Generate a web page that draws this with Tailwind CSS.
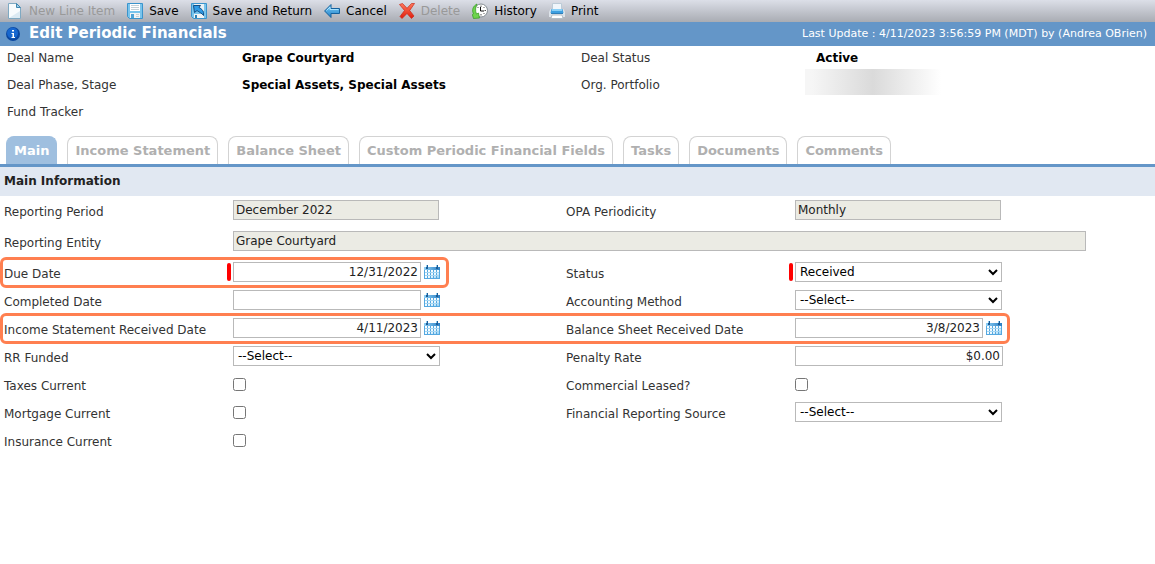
<!DOCTYPE html>
<html lang="en">
<head>
    <meta charset="UTF-8">
    <meta name="viewport" content="width=device-width, initial-scale=1.0">
    <title>Edit Periodic Financials</title>
    <script src="https://cdn.jsdelivr.net/npm/@tailwindcss/browser@4"></script>
</head>
<body class="bg-white min-h-screen font-['DejaVu_Sans',Verdana,sans-serif] text-xs text-[#333]">

    <!-- Shared gradients and the calendar glyph -->
    <svg class="absolute w-0 h-0" aria-hidden="true">
        <defs>
            <linearGradient id="blue" x1="0" y1="0" x2="0" y2="1">
                <stop offset="0" stop-color="#7fd0f8"/>
                <stop offset="1" stop-color="#1f7fc8"/>
            </linearGradient>
            <linearGradient id="red" x1="0" y1="0" x2="0" y2="1">
                <stop offset="0" stop-color="#ff7a5c"/>
                <stop offset="1" stop-color="#e01c0c"/>
            </linearGradient>
            <linearGradient id="bar" x1="0" y1="0" x2="1" y2="0">
                <stop offset="0" stop-color="#8fd0f5"/>
                <stop offset="1" stop-color="#2a7fc4"/>
            </linearGradient>
            <linearGradient id="cells" x1="0" y1="0" x2="1" y2="1">
                <stop offset="0" stop-color="#ffffff"/>
                <stop offset=".6" stop-color="#eef9ff"/>
                <stop offset="1" stop-color="#8fcdf2"/>
            </linearGradient>
            <symbol id="calendar" viewBox="0 0 16 16">
                <path d="M0 3h16v12H0z" fill="#55a8e0"/>
                <path d="M0 3h16v3H0z" fill="url(#bar)"/>
                <path d="M2 1h2v4H2zM12 1h2v4h-2z" fill="#1d5c97"/>
                <path d="M2 1h1v2H2zM12 1h1v2h-1z" fill="#8fcdf0"/>
                <path d="M1 6h2v2H1zM4 6h2v2H4zM7 6h2v2H7zM10 6h2v2h-2zM13 6h2v2h-2zM1 9h2v2H1zM4 9h2v2H4zM7 9h2v2H7zM10 9h2v2h-2zM13 9h2v2h-2zM1 12h2v2H1zM4 12h2v2H4zM7 12h2v2H7zM10 12h2v2h-2zM13 12h2v2h-2z" fill="url(#cells)"/>
                <path d="M1 8h14v1H1zM1 11h14v1H1z" fill="#a5d6f3"/>
            </symbol>
        </defs>
    </svg>

    <!-- Toolbar -->
    <div class="flex items-center gap-3 h-[22px] pl-[7px] bg-linear-to-b from-[#dcdfe8] to-[#a9acb3] text-black">
        <button class="flex items-center gap-1.5 text-[#999]" disabled>
            <svg class="w-4 h-4" viewBox="0 0 16 16"><path d="M1.500.5h8l4 4v11h-12z" fill="#f7fbfd" stroke="#7fa9c2"/><path d="M9.500.5v4h4z" fill="#9fd0ec" stroke="#3f86b0"/><path d="M2 15h11V8z" fill="#dbeaf3"/></svg>
            New Line Item
        </button>
        <button class="flex items-center gap-1.5">
            <svg class="w-4 h-4" viewBox="0 0 16 16"><path d="M.5.5h15v15h-13l-2-2z" fill="#79c4ec" stroke="#3a94cc"/><path d="M3 1h10v7H3z" fill="#fff"/><path d="M4 2.500h8M4 4.500h8M4 6.500h8" stroke="#c4d0d6"/><path d="M3 10h10v5H3z" fill="#f1f4f5"/><path d="M4 11h3v4H4z" fill="#4fa3d6"/><path d="M9 11.500h3M9 13.500h3" stroke="#c8d0d4"/></svg>
            Save
        </button>
        <button class="flex items-center gap-1.5">
            <svg class="w-4 h-4" viewBox="0 0 16 16"><path d="M.5.5h15v15h-13l-2-2z" fill="#79c4ec" stroke="#3a94cc"/><path d="M3 1h10v7H3z" fill="#e9f1f5"/><path d="M3 11h10v4H3z" fill="#f1f4f5"/><path d="M4 12h2v3H4z" fill="#2f80b4"/><path d="M2.500 2.500h7L8 4.500C11 6 13 8 12.500 12.500 11 10 8.500 9.500 6 7.500L3.500 9.500z" fill="#2e9be6" stroke="#124f86" stroke-linejoin="round"/></svg>
            Save and Return
        </button>
        <button class="flex items-center gap-1.5">
            <svg class="w-4 h-4" viewBox="0 0 16 16"><path d="M.6 8L7 1.500v4h8.500v5H7v4z" fill="url(#blue)" stroke="#14609c" stroke-linejoin="round"/><path d="M2.500 7.500L6 4v2.500h8.500" fill="none" stroke="#a8e2ff"/></svg>
            Cancel
        </button>
        <button class="flex items-center gap-1.5 text-[#999]" disabled>
            <svg class="w-4 h-4" viewBox="0 0 16 16"><path d="M.5 1.500L3.500.5l4.500 4.800L12.500.5h3L10.700 7.500l4.300 5.500-2.500 2.500L8 10.500l-5 5-2-2 4.500-6z" fill="url(#red)" stroke="#c8281a" stroke-width=".7" stroke-linejoin="round"/></svg>
            Delete
        </button>
        <button class="flex items-center gap-1.5">
            <svg class="w-4 h-4" viewBox="0 0 16 16"><circle cx="9" cy="7.500" r="6.500" fill="#fff" stroke="#858d93"/><path d="M9 2.500V4M9 11v1.500M12.500 7.500H14M5.500 4l1 1M12.500 4l-1 1M12.500 11l-1-1" stroke="#555"/><path d="M8.500 4v4H12" fill="none" stroke="#111"/><path d="M5 1C1 3-.5 7 1.500 10.800L.3 11.500 1.500 15.500l6-.5L6.500 10 4.500 11C3 7.500 3.500 4 5 1z" fill="#6fd44e" stroke="#2f9a1e" stroke-width=".7"/></svg>
            History
        </button>
        <button class="flex items-center gap-1.5">
            <svg class="w-4 h-4" viewBox="0 0 16 16"><path d="M3.500.5h9V7h-9z" fill="#f0f6fb" stroke="#bccbd7"/><path d="M1.500 6h13l1.500 3v5H0V9z" fill="#dde3e9"/><path d="M2.500 6h11l1 4h-13z" fill="#3d9fe0"/><path d="M3 6h10v2H3z" fill="#8ad0f7"/><path d="M2 10h12v1H2z" fill="#2f7fba"/><path d="M3 12h10l1 3.500H2z" fill="#fff" stroke="#b4bec6"/></svg>
            Print
        </button>
    </div>

    <!-- Page title -->
    <div class="flex items-center justify-between h-6 pl-[5px] pr-2 bg-[#6496c8] text-white">
        <div class="flex items-center gap-2">
            <svg class="w-4 h-4" viewBox="0 0 16 16"><circle cx="8" cy="8" r="7" fill="#0a47a0"/><circle cx="7.500" cy="7" r="5.500" fill="#1767cf"/><path d="M7 4h2v1.500H7zM6.500 7H9v4h1v1H6.500v-1h1V8h-1z" fill="#fff"/></svg>
            <h1 class="text-[15px] font-bold">Edit Periodic Financials</h1>
        </div>
        <p class="text-[11px]">Last Update : 4/11/2023 3:56:59 PM (MDT) by (Andrea OBrien)</p>
    </div>

    <!-- Deal summary -->
    <dl class="grid grid-cols-[235px_339px_235px_1fr] gap-y-[3px] pl-[7px] leading-6">
        <dt>Deal Name</dt>
        <dd class="font-bold text-black">Grape Courtyard</dd>
        <dt>Deal Status</dt>
        <dd class="font-bold text-black">Active</dd>
        <dt>Deal Phase, Stage</dt>
        <dd class="font-bold text-black">Special Assets, Special Assets</dd>
        <dt>Org. Portfolio</dt>
        <dd class="flex items-start">
            <span class="w-[136px] h-[26px] -ml-[11px] -my-1 bg-linear-to-r from-[#f6f6f6] from-5% via-[#dadada] via-50% to-white"></span>
        </dd>
        <dt>Fund Tracker</dt>
    </dl>

    <!-- Tabs -->
    <nav class="flex gap-2.5 mt-3 pl-1.5 border-b-3 border-[#6496c8] text-[13px] font-bold text-[#b0b0b0] leading-[27px]">
        <a href="#main" class="px-[7px] border border-b-0 border-[#9fbfdf] bg-[#9fbfdf] rounded-t-lg text-white">Main</a>
        <a href="#income" class="px-[7px] border border-b-0 border-[#d3d3d3] rounded-t-lg">Income Statement</a>
        <a href="#balance" class="px-[7px] border border-b-0 border-[#d3d3d3] rounded-t-lg">Balance Sheet</a>
        <a href="#custom" class="px-[7px] border border-b-0 border-[#d3d3d3] rounded-t-lg">Custom Periodic Financial Fields</a>
        <a href="#tasks" class="px-[7px] border border-b-0 border-[#d3d3d3] rounded-t-lg">Tasks</a>
        <a href="#documents" class="px-[7px] border border-b-0 border-[#d3d3d3] rounded-t-lg">Documents</a>
        <a href="#comments" class="px-[7px] border border-b-0 border-[#d3d3d3] rounded-t-lg">Comments</a>
    </nav>

    <h2 class="pl-1 bg-[#e1e8f2] font-bold leading-[29px] text-[#222]">Main Information</h2>

    <!-- Form -->
    <form class="text-[#333] leading-6">
        <div class="grid grid-cols-[229px_333px_229px_1fr] pl-1 pt-1 h-[31px] items-start">
            <label for="period">Reporting Period</label>
            <div class="flex"><input id="period" value="December 2022" readonly class="w-[206px] h-5 px-0.5 border border-[#b9b9b9] bg-[#ebebe4] text-[#222]"></div>
            <label for="opa">OPA Periodicity</label>
            <div class="flex"><input id="opa" value="Monthly" readonly class="w-[206px] h-5 px-0.5 border border-[#b9b9b9] bg-[#ebebe4] text-[#222]"></div>
        </div>
        <div class="grid grid-cols-[229px_1fr] pl-1 pr-[69px] pt-1 h-[31px] items-start">
            <label for="entity">Reporting Entity</label>
            <input id="entity" value="Grape Courtyard" readonly class="w-full h-5 px-0.5 border border-[#b9b9b9] bg-[#ebebe4] text-[#222]">
        </div>

        <div class="relative grid grid-cols-[229px_333px_229px_1fr] pl-1 pt-1 h-7 items-start">
            <label for="due">Due Date</label>
            <div class="relative flex items-center gap-[3px] h-5">
                <span class="absolute -left-1.5 w-1 h-[18px] rounded-xs bg-[#f00]"></span>
                <input id="due" value="12/31/2022" class="w-[188px] h-5 px-0.5 border border-[#b9b9b9] text-right text-[#222]">
                <button type="button" aria-label="Pick due date"><svg class="w-4 h-4"><use href="#calendar"/></svg></button>
            </div>
            <label for="status">Status</label>
            <div class="relative flex items-center h-5">
                <span class="absolute -left-1.5 w-1 h-[18px] rounded-xs bg-[#f00]"></span>
                <select id="status" class="w-[207px] h-5 border border-[#b9b9b9] bg-white text-black"><option>Received</option></select>
            </div>
            <div class="absolute left-0 -top-px w-[449px] h-[31px] border-3 border-[#ff7f50] rounded-md pointer-events-none"></div>
        </div>
        <div class="grid grid-cols-[229px_333px_229px_1fr] pl-1 pt-1 h-7 items-start">
            <label for="completed">Completed Date</label>
            <div class="flex items-center gap-[3px] h-5">
                <input id="completed" class="w-[188px] h-5 px-0.5 border border-[#b9b9b9] text-right text-[#222]">
                <button type="button" aria-label="Pick completed date"><svg class="w-4 h-4"><use href="#calendar"/></svg></button>
            </div>
            <label for="accounting">Accounting Method</label>
            <div class="flex"><select id="accounting" class="w-[207px] h-5 border border-[#b9b9b9] bg-white text-black"><option>--Select--</option></select></div>
        </div>
        <div class="relative grid grid-cols-[229px_333px_229px_1fr] pl-1 pt-1 h-7 items-start">
            <label for="income-received">Income Statement Received Date</label>
            <div class="flex items-center gap-[3px] h-5">
                <input id="income-received" value="4/11/2023" class="w-[188px] h-5 px-0.5 border border-[#b9b9b9] text-right text-[#222]">
                <button type="button" aria-label="Pick income statement date"><svg class="w-4 h-4"><use href="#calendar"/></svg></button>
            </div>
            <label for="balance-received">Balance Sheet Received Date</label>
            <div class="flex items-center gap-[3px] h-5">
                <input id="balance-received" value="3/8/2023" class="w-[188px] h-5 px-0.5 border border-[#b9b9b9] text-right text-[#222]">
                <button type="button" aria-label="Pick balance sheet date"><svg class="w-4 h-4"><use href="#calendar"/></svg></button>
            </div>
            <div class="absolute left-0 -top-px w-[1010px] h-[31px] border-3 border-[#ff7f50] rounded-md pointer-events-none"></div>
        </div>
        <div class="grid grid-cols-[229px_333px_229px_1fr] pl-1 pt-1 h-7 items-start">
            <label for="rr">RR Funded</label>
            <div class="flex"><select id="rr" class="w-[207px] h-5 border border-[#b9b9b9] bg-white text-black"><option>--Select--</option></select></div>
            <label for="penalty">Penalty Rate</label>
            <div class="flex"><input id="penalty" value="$0.00" class="w-[208px] h-5 px-0.5 border border-[#b9b9b9] text-right text-[#222]"></div>
        </div>
        <div class="grid grid-cols-[229px_333px_229px_1fr] pl-1 pt-1 h-7 items-start">
            <label for="taxes">Taxes Current</label>
            <div class="flex items-center h-5"><input id="taxes" type="checkbox"></div>
            <label for="leased">Commercial Leased?</label>
            <div class="flex items-center h-5"><input id="leased" type="checkbox"></div>
        </div>
        <div class="grid grid-cols-[229px_333px_229px_1fr] pl-1 pt-1 h-7 items-start">
            <label for="mortgage">Mortgage Current</label>
            <div class="flex items-center h-5"><input id="mortgage" type="checkbox"></div>
            <label for="source">Financial Reporting Source</label>
            <div class="flex"><select id="source" class="w-[207px] h-5 border border-[#b9b9b9] bg-white text-black"><option>--Select--</option></select></div>
        </div>
        <div class="grid grid-cols-[229px_333px_229px_1fr] pl-1 pt-1 h-7 items-start">
            <label for="insurance">Insurance Current</label>
            <div class="flex items-center h-5"><input id="insurance" type="checkbox"></div>
        </div>
    </form>
</body>
</html>
